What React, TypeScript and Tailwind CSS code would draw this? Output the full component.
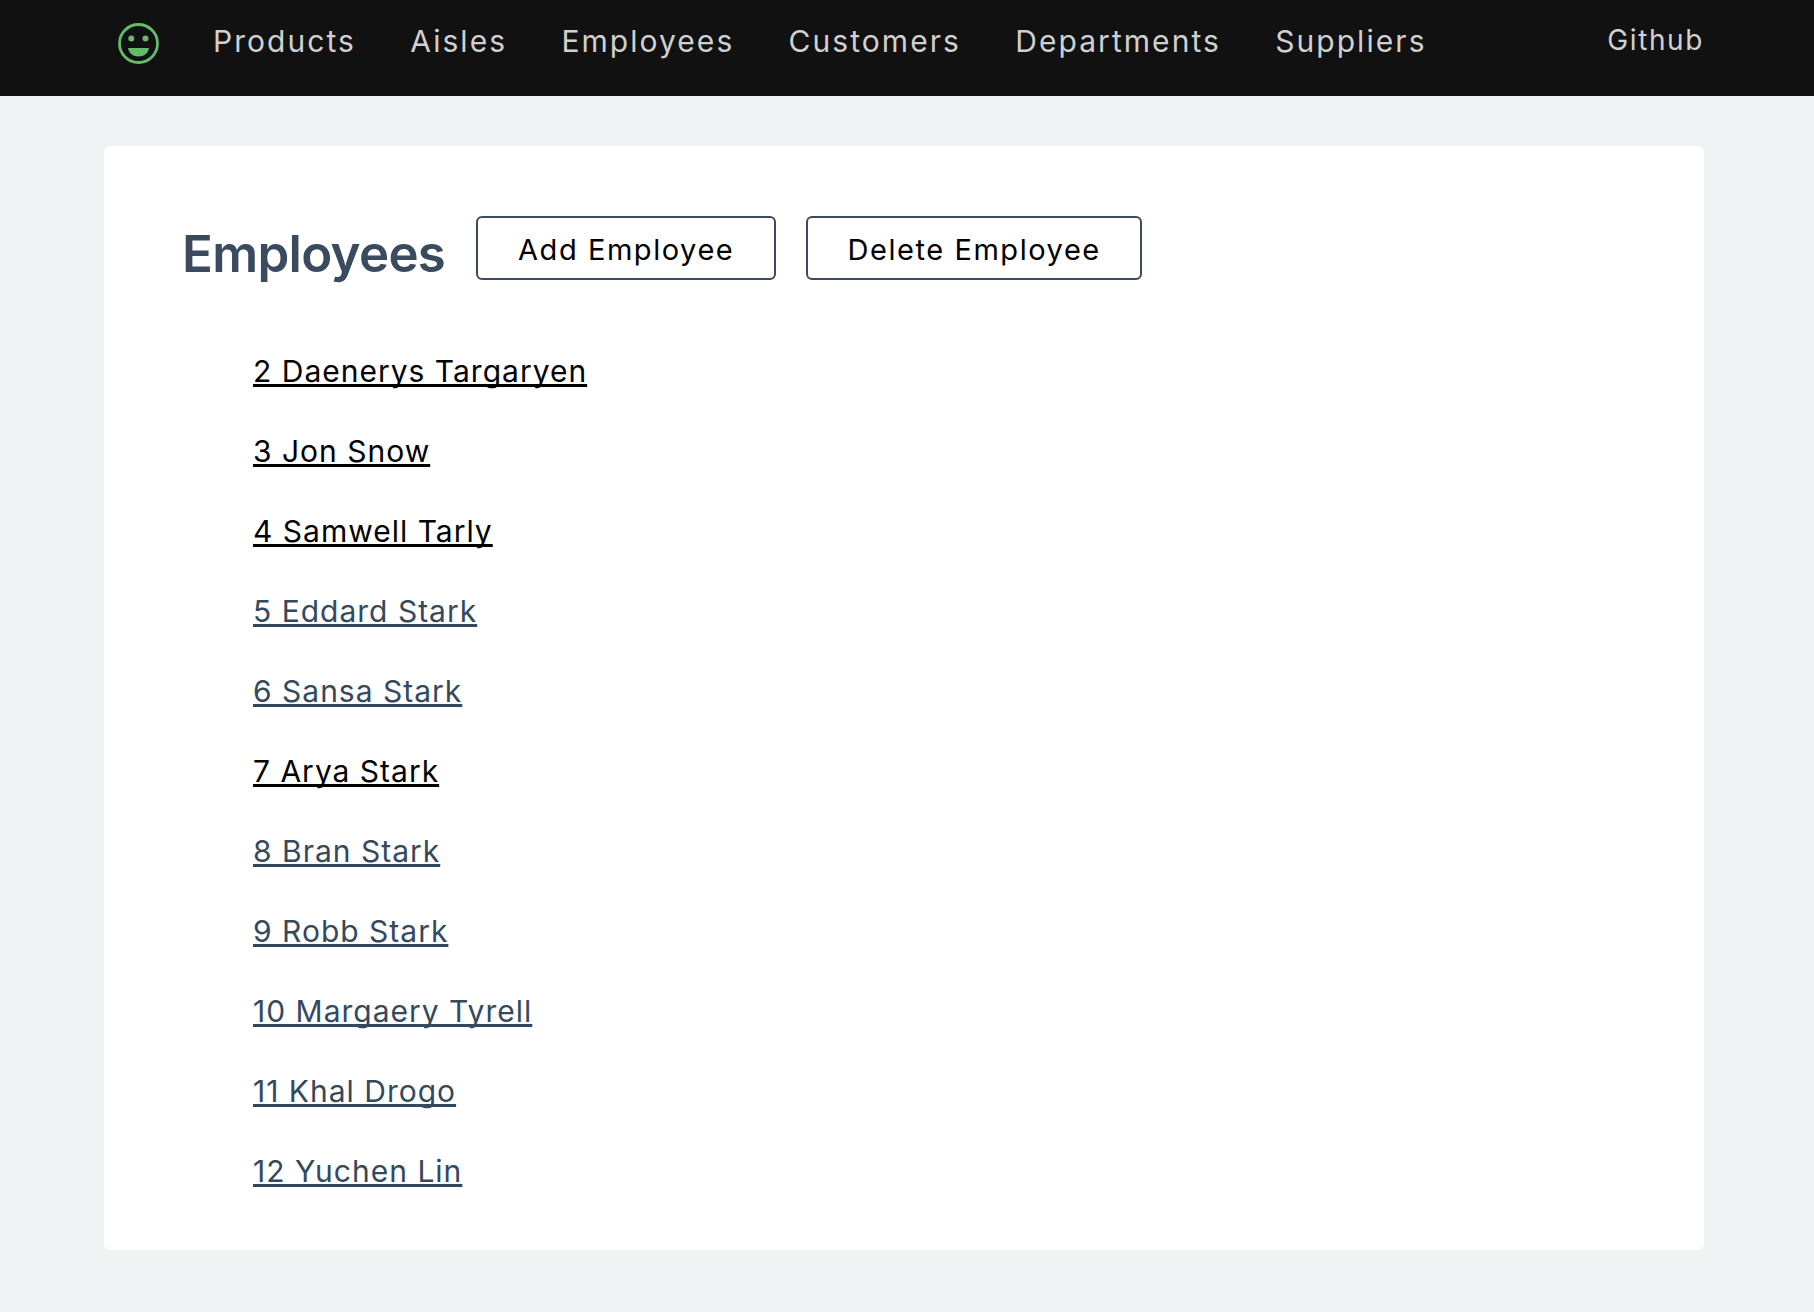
const NAV = ["Products", "Aisles", "Employees", "Customers", "Departments", "Suppliers"];

// Visited links show up black in the reference, the rest keep the slate link colour.
const EMPLOYEES = [
  { label: "2 Daenerys Targaryen", visited: true },
  { label: "3 Jon Snow", visited: true },
  { label: "4 Samwell Tarly", visited: true },
  { label: "5 Eddard Stark", visited: false },
  { label: "6 Sansa Stark", visited: false },
  { label: "7 Arya Stark", visited: true },
  { label: "8 Bran Stark", visited: false },
  { label: "9 Robb Stark", visited: false },
  { label: "10 Margaery Tyrell", visited: false },
  { label: "11 Khal Drogo", visited: false },
  { label: "12 Yuchen Lin", visited: false },
];

function Smiley() {
  return (
    <svg width="41" height="41" viewBox="0 0 41 41" fill="none">
      <circle cx="20.500" cy="20.500" r="19" stroke="#66bb6a" strokeWidth="2.800" />
      <circle cx="13.300" cy="15.500" r="3" fill="#66bb6a" />
      <circle cx="27.500" cy="15.500" r="3" fill="#66bb6a" />
      <path d="M10 25h21c-.7 5-5 8.500-10.500 8.500S10.700 30 10 25z" fill="#66bb6a" />
    </svg>
  );
}

function OutlineButton({ label, width }: { label: string; width: string }) {
  return (
    <button className={`flex h-[64px] ${width} items-center justify-center rounded-md border-2 border-[#3b4a5e] bg-white pt-[4px] text-[29px] tracking-[1.55px] text-black`}>
      {label}
    </button>
  );
}

export default function App() {
  return (
    <div className="min-h-[1312px] bg-[#f1f2f4] font-['Inter',sans-serif]">
      <header className="flex h-[96px] items-center bg-[#111111] pr-[110px] pb-[9px] pl-[118px]">
        <Smiley />
        <nav className="ml-[54px] flex gap-[54.300px] pb-[5px] text-[30px] tracking-[2.050px] text-[#d0d0d0]">
          {NAV.map((n) => (
            <a key={n}>{n}</a>
          ))}
        </nav>
        <a className="ml-auto pb-[8px] text-[28px] tracking-[1.600px] text-[#d0d0d0]">Github</a>
      </header>

      <main className="mx-[104px] mt-[50px] h-[1104px] w-[1600px] rounded-md bg-white pt-[70px] pl-[78px]">
        <div className="flex items-start">
          <h1 className="text-[51px] leading-[76px] font-semibold tracking-[-0.7px] text-[#3a4a5f]">Employees</h1>
          <div className="ml-[31px] flex gap-[30px]">
            <OutlineButton label="Add Employee" width="w-[300px]" />
            <OutlineButton label="Delete Employee" width="w-[336px]" />
          </div>
        </div>
        <ul className="mt-[53px] ml-[71px] flex flex-col">
          {EMPLOYEES.map((e) => (
            <li key={e.label} className="h-[80px] text-[30px] leading-[52px] tracking-[1px]">
              <a className={`underline decoration-[2.500px] underline-offset-[2px] [text-decoration-skip-ink:none] ${e.visited ? "text-black" : "text-[#34495e]"}`}>
                {e.label}
              </a>
            </li>
          ))}
        </ul>
      </main>
    </div>
  );
}
